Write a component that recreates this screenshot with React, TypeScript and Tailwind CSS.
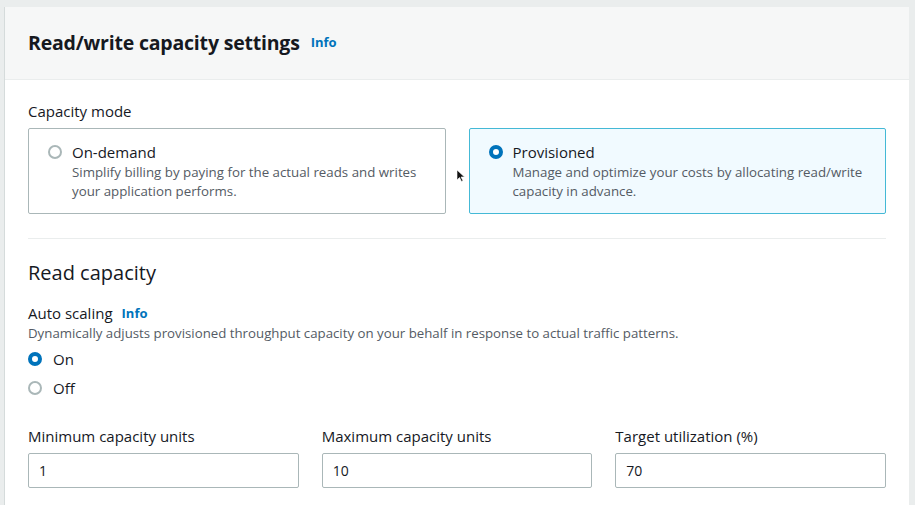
import React from "react";

function Radio({ checked }: { checked: boolean }) {
  return checked ? (
    <span className="inline-block w-[14px] h-[14px] rounded-full border-[4px] border-[#0073bb] bg-white shrink-0" />
  ) : (
    <span className="inline-block w-[14px] h-[14px] rounded-full border-[2px] border-[#aab7b8] bg-white shrink-0" />
  );
}

function ModeCard({
  title,
  desc,
  checked,
}: {
  title: string;
  desc: string;
  checked: boolean;
}) {
  return (
    <div
      className={
        checked
          ? "flex-1 h-[86px] rounded-[2px] border border-[#44b9d6] bg-[#f1faff] pl-[19px] pr-[20px] pt-[13px]"
          : "flex-1 h-[86px] rounded-[2px] border border-[#aab7b8] bg-white pl-[19px] pr-[20px] pt-[13px]"
      }
    >
      <div className="flex items-start gap-[10px]">
        <div className="h-[20px] flex items-center">
          <Radio checked={checked} />
        </div>
        <div>
          <div className="text-[15px] leading-[20px] text-[#16191f]">{title}</div>
          <div className="text-[13.3px] leading-[19px] text-[#545b64] mt-[1px]">{desc}</div>
        </div>
      </div>
    </div>
  );
}

function Field({ label, value }: { label: string; value: string }) {
  return (
    <div className="flex-1 flex flex-col">
      <div className="text-[15px] leading-[20px] text-[#16191f] font-medium">{label}</div>
      <div className="mt-[7px] h-[35px] border border-[#aab7b8] rounded-[2px] bg-white flex items-center px-[10px] text-[14px] text-[#16191f]">
        {value}
      </div>
    </div>
  );
}

export default function App() {
  return (
    <div
      className="w-[915px] h-[505px] overflow-hidden bg-[#eaeded] pt-[7px] pl-[4px] pr-[6px] relative"
      style={{ fontFamily: "'Open Sans', 'Liberation Sans', sans-serif" }}
    >
      <div className="bg-white border-l border-[#d5dbdb] h-full">
        <div className="h-[73px] bg-[#f6f7f7] border-b border-[#eaeded] flex items-center px-[23px]">
          <span className="text-[19.5px] font-bold text-[#16191f] tracking-[-0.2px]">Read/write capacity settings</span>
          <span className="ml-[11px] text-[13px] font-bold text-[#0073bb]">Info</span>
        </div>
        <div className="px-[23px] pt-[21px]">
          <div className="text-[15px] leading-[20px] text-[#16191f] font-medium">Capacity mode</div>
          <div className="mt-[7px] flex gap-[23px]">
            <ModeCard
              title="On-demand"
              desc="Simplify billing by paying for the actual reads and writes your application performs."
              checked={false}
            />
            <ModeCard
              title="Provisioned"
              desc="Manage and optimize your costs by allocating read/write capacity in advance."
              checked={true}
            />
          </div>
          <div className="mt-[24px] border-t border-[#eaeded]" />
          <div className="mt-[22px] text-[20px] leading-[24px] text-[#16191f]">Read capacity</div>
          <div className="mt-[18px] text-[15px] leading-[20px] text-[#16191f] font-medium flex items-center">
            Auto scaling
            <span className="ml-[9px] text-[13px] font-bold text-[#0073bb]">Info</span>
          </div>
          <div className="mt-[1px] text-[13.25px] leading-[18px] text-[#545b64]">
            Dynamically adjusts provisioned throughput capacity on your behalf in response to actual traffic patterns.
          </div>
          <div className="mt-[5px] flex flex-col gap-[5px]">
            <div className="h-[24px] flex items-center gap-[11px]">
              <Radio checked={true} />
              <span className="text-[15px] text-[#16191f]">On</span>
            </div>
            <div className="h-[24px] flex items-center gap-[11px]">
              <Radio checked={false} />
              <span className="text-[15px] text-[#16191f]">Off</span>
            </div>
          </div>
          <div className="mt-[26px] flex gap-[23px]">
            <Field label="Minimum capacity units" value="1" />
            <Field label="Maximum capacity units" value="10" />
            <Field label="Target utilization (%)" value="70" />
          </div>
        </div>
      </div>
      <svg className="absolute left-[457px] top-[170px]" width="8" height="12" viewBox="0 0 8 12">
        <path d="M0 0 L0 10 L2.5 7.5 L4.5 11.5 L6 10.8 L4 7 L7.5 7 Z" fill="#111" stroke="#fff" strokeWidth="0.6" />
      </svg>
    </div>
  );
}
